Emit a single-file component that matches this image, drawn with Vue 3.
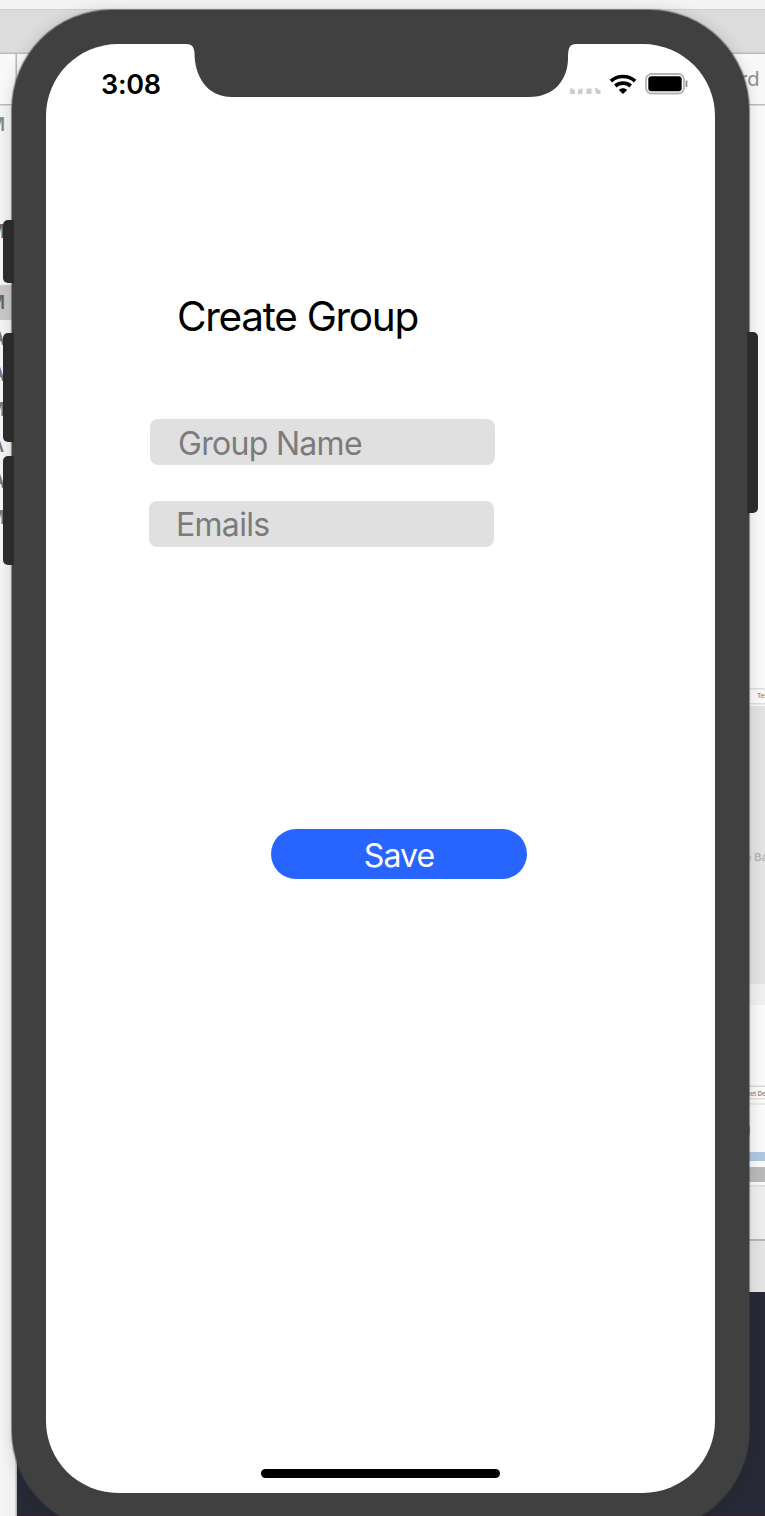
<script setup>
const fields = [
  { id: 'name', label: 'Group Name' },
  { id: 'emails', label: 'Emails' },
]
const letters = [
  { c: 'M', x: 5, y: 131, f: '#8a8a8a' },
  { c: 'M', x: 5, y: 238, f: '#666' },
  { c: 'M', x: 5, y: 309, f: '#666' },
  { c: 'A', x: 5, y: 345, f: '#777' },
  { c: 'A', x: 5, y: 381, f: '#777' },
  { c: 'M', x: 5, y: 416, f: '#777' },
  { c: 'A', x: 4, y: 452, f: '#777' },
  { c: 'A', x: 5, y: 488, f: '#777' },
  { c: 'M', x: 5, y: 524, f: '#777' },
]
</script>

<template>
  <div class="desktop">
    <svg class="backdrop" viewBox="0 0 765 1516" width="765" height="1516">
      <defs>
        <linearGradient id="leftShade" x1="0" x2="1" y1="0" y2="0">
          <stop offset="0" stop-color="#f6f6f6" />
          <stop offset="1" stop-color="#eeeeee" />
        </linearGradient>
        <linearGradient id="rightShade" x1="0" x2="1" y1="0" y2="0">
          <stop offset="0" stop-color="#f6f6f6" />
          <stop offset="1" stop-color="#fbfbfb" />
        </linearGradient>
      </defs>
      <rect width="765" height="1516" fill="#272a36" />
      <rect y="1515" width="765" height="1" fill="#35202f" />
      <rect width="765" height="10" fill="#f4f4f4" />
      <rect y="9" width="765" height="44" fill="#dcdcdc" />
      <rect y="9" width="765" height="1" fill="#cfcfcf" />
      <rect y="53" width="765" height="52" fill="#f9f9f9" />
      <rect y="52.5" width="765" height="1.5" fill="#bcbcbc" />
      <rect y="105" width="17" height="1411" fill="url(#leftShade)" />
      <rect y="104" width="17" height="1.5" fill="#bcbcbc" />
      <rect x="15.5" y="53" width="1.5" height="1463" fill="#b8b8b8" />
      <rect y="285" width="14" height="35" fill="#c9c9c9" />
      <text v-for="l in letters" :key="l.y" :x="l.x" :y="l.y" :fill="l.f" class="mark">{{ l.c }}</text>

      <rect x="740" y="105" width="25" height="1187" fill="url(#rightShade)" />
      <rect x="740" y="104" width="25" height="1.5" fill="#bcbcbc" />
      <text x="740" y="86" class="tab">rd</text>
      <rect x="740" y="688" width="25" height="1.5" fill="#dedede" />
      <rect x="740" y="703" width="25" height="1.5" fill="#dedede" />
      <text x="757" y="698" class="tiny">Test</text>
      <rect x="740" y="706" width="25" height="278" fill="#e3e3e3" />
      <text x="745" y="860.500" class="faint">e Ba</text>
      <rect x="740" y="984" width="25" height="21" fill="#f0f0f0" />
      <rect x="740" y="1085.500" width="25" height="1.500" fill="#d8d8d8" />
      <text x="747" y="1096" class="tiny">eet Des</text>
      <rect x="740" y="1098" width="25" height="1.500" fill="#dedede" />
      <rect x="740" y="1103.500" width="25" height="1" fill="#dcdcdc" />
      <rect x="740" y="1126" width="10" height="9" fill="#999" />
      <rect x="740" y="1152" width="25" height="9" fill="#b0c6e2" />
      <rect x="740" y="1167" width="25" height="15" fill="#bababa" />
      <rect x="740" y="1186" width="25" height="54" fill="#eeeeee" />
      <rect x="740" y="1185" width="25" height="1.500" fill="#dddddd" />
      <rect x="740" y="1239" width="25" height="53" fill="#e4e4e4" />
      <rect x="740" y="1239" width="25" height="2" fill="#b5b5b5" />
    </svg>

    <div class="phone">
      <div class="body">
        <main class="screen">
          <svg class="notch" viewBox="0 0 388 53" width="388" height="53">
            <path d="M0 0C6 0 8 3 8.500 9C8.500 31 20 53 46 53H343C369 53 382 35 382 14C382 3 384 0 390 0V-1H0Z" fill="#404040" />
          </svg>
          <header class="status">
            <span class="time">3:08</span>
            <div class="indicators">
              <svg class="signal" width="32" height="8" viewBox="0 0 32 8" fill="#cdcdcd">
                <path d="M0 1.500L2 1L3 2.500H5V7H0ZM8 3L12.500 1V7H8ZM16.500 1.500H21.500V7H16.500ZM25 1H27L28 2.500L30.500 3V7H26Z" />
              </svg>
              <svg class="wifi" width="28" height="22" viewBox="0 0 28 22">
                <path d="M1.900 8.200C8.500 1.900 19.500 1.900 26.100 8.200M6.300 13C10.700 9.200 17.300 9.200 21.700 13" fill="none" stroke="#000" stroke-width="3.700" />
                <path d="M9.800 17C12.200 14.600 15.800 14.600 18.200 17L14 21Z" />
              </svg>
              <svg class="battery" width="43" height="22" viewBox="0 0 43 22">
                <rect x="1" y="1" width="38" height="19.500" rx="5.500" fill="#fff" stroke="#b4b4b4" stroke-width="1.800" />
                <rect x="3.300" y="3.300" width="33.400" height="15" rx="3" fill="#000" />
                <path d="M41.500 7.500V14" stroke="#888" stroke-width="1.700" />
              </svg>
            </div>
          </header>
          <h1>Create Group</h1>
          <form class="form" @submit.prevent>
            <div v-for="f in fields" :key="f.id" class="field" :class="f.id">
              <span>{{ f.label }}</span>
            </div>
            <button type="submit" class="save"><span>Save</span></button>
          </form>
          <div class="home"></div>
        </main>
      </div>
      <i class="key left mute"></i>
      <i class="key left up"></i>
      <i class="key left down"></i>
      <i class="key power"></i>
    </div>
  </div>
</template>

<style>
html, body { overflow: hidden; }
</style>

<style scoped>
.desktop {
  position: relative;
  width: 765px;
  height: 1516px;
  overflow: hidden;
  font-family: Inter, "Liberation Sans", sans-serif;
}
.backdrop { position: absolute; inset: 0; display: block; }
.mark { font-size: 18px; font-weight: 600; text-anchor: end; }
.tab { font-size: 20px; fill: #8e8e8e; }
.tiny { font-size: 6px; font-weight: 600; fill: #888; }
.faint { font-size: 11px; font-weight: 600; fill: #b4b4b4; }
.phone {
  position: relative;
  width: 737px;
  height: 1520px;
  margin-left: 12px;
  padding-top: 10px;
}
.body {
  box-sizing: border-box;
  height: 1520px;
  padding: 33.500px 34px 37px;
  border-radius: 100px;
  background: #404040;
  box-shadow: 0 0 1px 0.5px rgba(70, 70, 70, 0.6), 0 0 16px rgba(0, 0, 0, 0.14);
}
.key { position: absolute; background: #2b2b2b; }
.left { left: -9.500px; width: 11px; border-radius: 5px 0 0 5px; }
.mute { top: 220px; height: 62.500px; }
.up { top: 332.500px; height: 109px; }
.down { top: 455.500px; height: 109px; }
.power { right: -9px; top: 332px; width: 11px; height: 181px; border-radius: 0 5px 5px 0; }
.screen {
  position: relative;
  display: flex;
  flex-direction: column;
  width: 669px;
  height: 1449px;
  background: #fff;
  border-radius: 72px;
}
.notch { position: absolute; left: 140px; top: 0; display: block; overflow: visible; }
.status {
  display: flex;
  justify-content: space-between;
  align-items: flex-start;
  height: 54px;
  padding: 0 27px 0 55px;
}
.time {
  padding-top: 23px;
  font-size: 27px;
  line-height: 36px;
  font-weight: 600;
  letter-spacing: -0.3px;
}
.indicators { display: flex; padding-top: 29px; }
.signal { margin: 14px 7px 0 0; }
.battery { margin-left: 8px; }
h1 {
  margin: 195.500px 0 0 131px;
  font-size: 40.500px;
  line-height: 48px;
  font-weight: 400;
  letter-spacing: -1.300px;
  color: #000;
  white-space: nowrap;
}
.form { display: flex; flex-direction: column; padding: 78px 0 0 103px; }
.field {
  display: flex;
  align-items: center;
  width: 345px;
  height: 46px;
  margin-left: 1px;
  padding-left: 28px;
  box-sizing: border-box;
  border-radius: 8px;
  background: #e0e0e0;
  color: #7b7b7b;
  font-size: 32px;
  line-height: 46px;
  letter-spacing: -0.700px;
}
.field.emails { margin: 35.500px 0 0; padding-left: 27px; }
.field.name span { padding-top: 4px; }
.field.emails span { padding-top: 2.500px; }
.save {
  display: flex;
  align-items: center;
  justify-content: center;
  width: 256px;
  height: 50px;
  margin: 282.500px 0 0 122px;
  padding: 4px 0 0;
  border: 0;
  border-radius: 25px;
  background: #2864ff;
  color: #fff;
  font: 400 32px/46px Inter, "Liberation Sans", sans-serif;
  letter-spacing: -0.900px;
}
.home {
  width: 239px;
  height: 9px;
  margin: auto 0 14.500px 215px;
  border-radius: 5px;
  background: #000;
}
</style>
